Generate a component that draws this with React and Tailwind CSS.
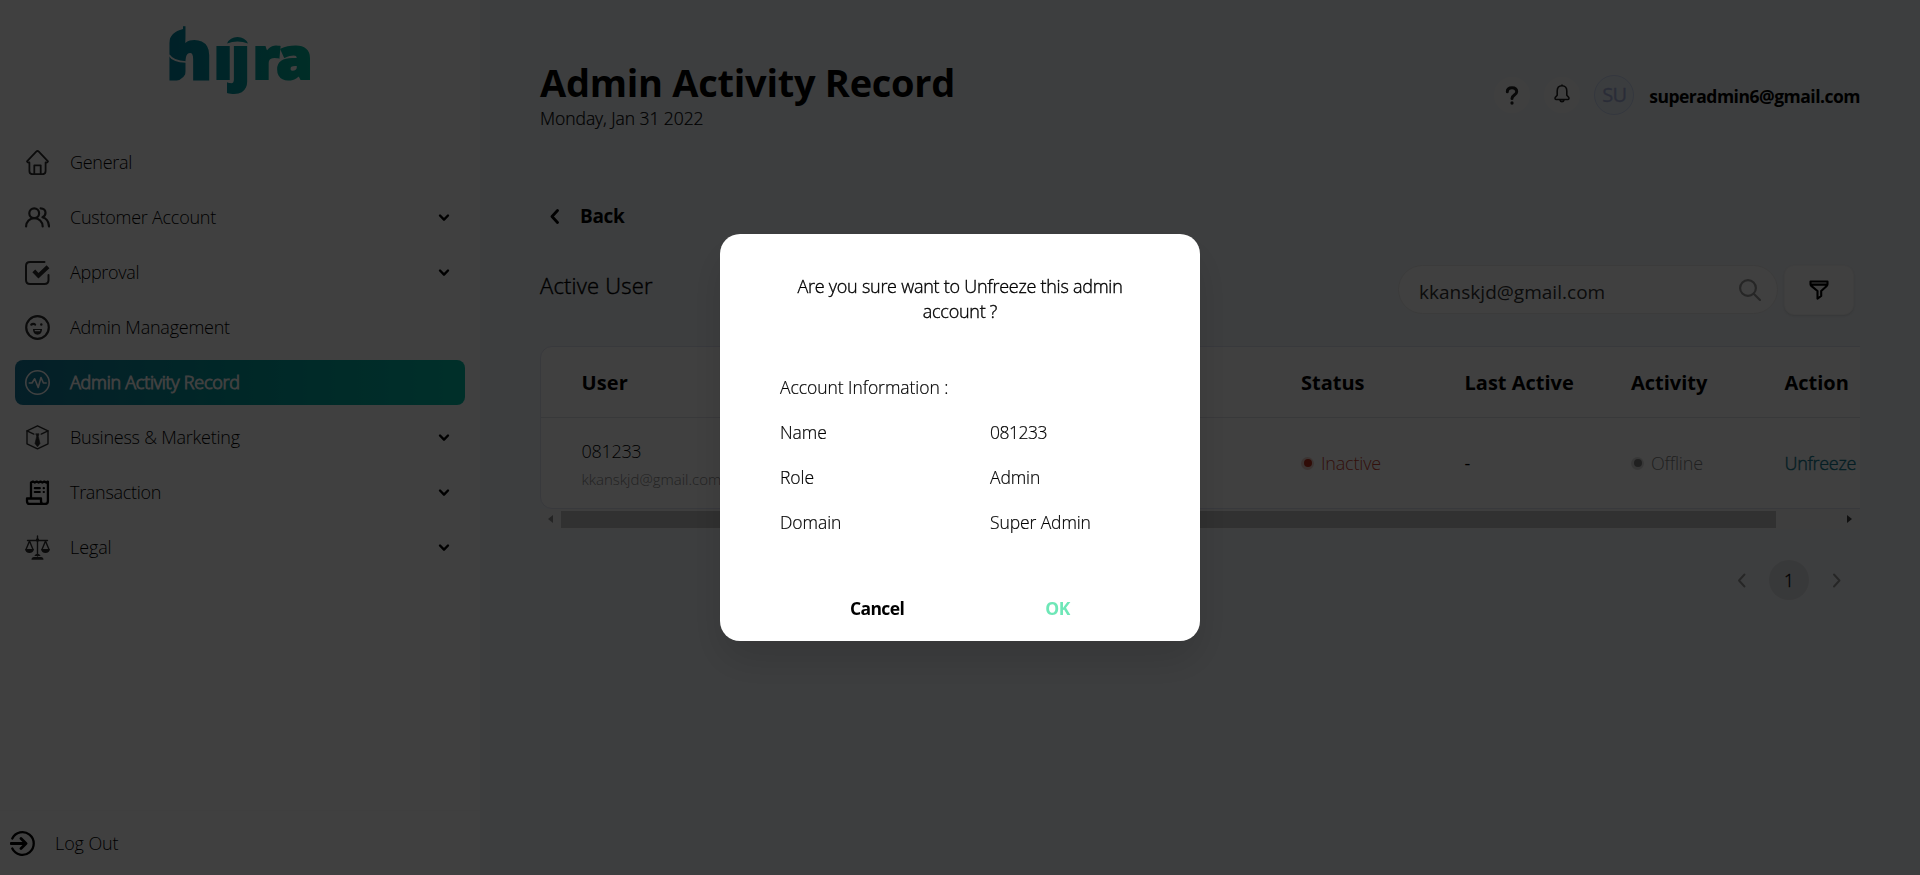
import React from "react";

const iconProps = { width: 25, height: 25, viewBox: "0 0 25 25", fill: "none", strokeLinecap: "round", strokeLinejoin: "round" };

function HomeIcon() {
  return (
    <svg {...iconProps} stroke="currentColor" strokeWidth="1.8">
      <path d="M2 11.3 11.2 1.600q1.300-1.200 2.600 0L23 11.300q-.4 1.600-2.400 1.200V21q0 3.200-3.200 3.200H7.600Q4.400 24.200 4.400 21v-8.500Q2.400 12.900 2 11.300Z" />
      <path d="M9.300 24v-8.700h6.400V24" />
    </svg>
  );
}

function UsersIcon() {
  return (
    <svg {...iconProps} stroke="currentColor" strokeWidth="2.200">
      <circle cx="9.200" cy="8.200" r="4.900" />
      <path d="M1.100 21.500c0-5 3.700-8.400 8.200-8.400s8.400 3.400 8.400 8.400" />
      <path d="M15.600 3.300c3 0 4.900 2 4.900 4.500 0 2.300-1.500 3.700-3 4.500 4 1.200 6.300 4.700 6.500 9.200" />
    </svg>
  );
}

function ApprovalIcon() {
  return (
    <svg {...iconProps} stroke="currentColor" strokeWidth="2">
      <path d="M19.500 1.900H5Q1 1.900 1 5.900V20q0 4 4 4h14.500q4 0 4-4v-5" />
      <path d="m8.800 10.900 4.700 4.900L23 6.800" strokeWidth="4" strokeLinecap="butt" strokeLinejoin="miter" />
    </svg>
  );
}

function WinkIcon() {
  return (
    <svg {...iconProps} stroke="currentColor" strokeWidth="2.200">
      <circle cx="12.500" cy="12.500" r="11.300" />
      <path d="M6.300 9.600c1-1 3-1 3.800 0" strokeWidth="2.200" />
      <circle cx="16.300" cy="9.500" r="1.200" fill="currentColor" stroke="none" />
      <path d="M8 14h9c0 3.800-2 5.700-4.500 5.700S8 17.800 8 14Z" fill="currentColor" stroke="none" />
      <path d="M10.200 15.600h4.600" stroke="#fff" strokeWidth="1.100" />
    </svg>
  );
}

function ActivityIcon() {
  return (
    <svg {...iconProps} stroke="currentColor" strokeWidth="1.600">
      <circle cx="12.500" cy="12.500" r="11.700" />
      <path d="M4.300 13H7l2.700-4.200 3.500 8.700L16 7.500l2.400 5.500h2.800" />
    </svg>
  );
}

function BusinessIcon() {
  return (
    <svg {...iconProps} stroke="currentColor" strokeWidth="1.400">
      <path d="M12.500.8 23 5.900v12.900l-10.500 5.100L2 18.800V5.900Z" />
      <path d="m2 5.900 6.800 3.200M23 5.900l-6.800 3.200" />
      <path d="M11 8.800h3l-.7 2.600 1.700 7.100-2.500 3.300-2.500-3.300 1.700-7.100Z" fill="currentColor" strokeWidth=".6" />
    </svg>
  );
}

function TransactionIcon() {
  return (
    <svg {...iconProps} stroke="currentColor" strokeWidth="2.300">
      <path d="M6 17.500V2.600l1.900-1 1.900 1 1.900-1 1.900 1 1.900-1 1.900 1 1.900-1 1.900 1 1.700-1V21q0 3-3 3H4.500Q2 24 2 21v-2.500h14V21q0 3 2.500 3" />
      <path d="M9.800 8.200h5M9.800 12h5M18.700 8.200h.2M18.700 12h.2" strokeWidth="2.200" />
    </svg>
  );
}

function LegalIcon() {
  return (
    <svg {...iconProps} stroke="currentColor" strokeWidth="1.400">
      <path d="M12.500 1v20M2.500 5.500h20" />
      <path d="M4.500 6 1 14.500M4.500 6 8 14.500M20.500 6 17 14.500M20.500 6l3.500 8.500" />
      <path d="M.2 14h8.600c0 2.600-1.800 3.900-4.300 3.900S.2 16.600.2 14ZM16.200 14h8.600c0 2.600-1.800 3.900-4.300 3.900s-4.300-1.300-4.300-3.900ZM6.500 24.800c0-2 1-2.800 2.500-2.800h7c1.500 0 2.500.8 2.500 2.800ZM9.500 21c.3-1.500 1.500-2 3-2s2.700.5 3 2Z" fill="currentColor" stroke="none" />
      <circle cx="12.500" cy="5" r="1.700" fill="currentColor" stroke="none" />
    </svg>
  );
}

function LogoutIcon() {
  return (
    <svg {...iconProps} stroke="currentColor" strokeWidth="2.300">
      <path d="M2.300 7.500a11.300 11.300 0 1 1 0 10" />
      <path d="M1 12.500h14.500M11 7.500l5 5-5 5" strokeWidth="2.800" />
    </svg>
  );
}

function Chevron({ dir, bold }) {
  const paths = { down: "m2 2.500 4 4.200 4-4.200", left: "M7.500 1.500 2 7.500l5.500 6", right: "m2 1.500 5.500 6-5.500 6" };
  return dir === "down" ? (
    <svg width="12" height="9" viewBox="0 0 12 9" fill="none" stroke="currentColor" strokeWidth="2.400" strokeLinecap="round" strokeLinejoin="round">
      <path d={paths.down} />
    </svg>
  ) : (
    <svg width="9" height="15" viewBox="0 0 9 15" fill="none" stroke="currentColor" strokeWidth={bold ? 2.8 : 2} strokeLinecap="round" strokeLinejoin="round">
      <path d={paths[dir]} />
    </svg>
  );
}

function Logo() {
  return (
    <svg width="140" height="62" viewBox="0 0 140 62" overflow="visible">
      <defs>
        <linearGradient id="brand" gradientUnits="userSpaceOnUse" x1="0" y1="30" x2="140" y2="20">
          <stop offset="0" stopColor="#00829f" />
          <stop offset="0.55" stopColor="#009c9e" />
          <stop offset="1" stopColor="#00b79b" />
        </linearGradient>
      </defs>
      <text x="-3.500 43.500 61 82.500 106" y="50" fontSize="59" fontWeight="800" fontFamily="Open Sans, sans-serif" fill="url(#brand)" stroke="url(#brand)" strokeWidth="2">
        <tspan fontSize="68" strokeWidth="3">h</tspan>ijra
      </text>
      <g fill="#fff">
        <path d="M42.500 -6H86V16.500H42.500Z" />
        <path d="M-1 -4V14Q0 3 13 0V-4Z" />
        <path d="M16.500 40Q16 50 4 53H16.500Z" />
      </g>
      <path d="M-1 26Q3 32.500 16 33" fill="none" stroke="#fff" strokeWidth="1.600" />
      <path d="M57 14.500Q60 8 67.500 8T78 14.500Q67.500 10.500 57 14.500Z" fill="url(#brand)" />
    </svg>
  );
}

const menu = [
  { label: "General", Icon: HomeIcon, cls: "tracking-[-0.28px]" },
  { label: "Customer Account", Icon: UsersIcon, cls: "tracking-[-0.25px]", sub: true },
  { label: "Approval", Icon: ApprovalIcon, cls: "tracking-[-0.3px]", sub: true },
  { label: "Admin Management", Icon: WinkIcon, cls: "tracking-[-0.24px]" },
  { label: "Admin Activity Record", Icon: ActivityIcon, cls: "tracking-[-0.25px] [-webkit-text-stroke:0.9px]", active: true },
  { label: "Business & Marketing", Icon: BusinessIcon, cls: "tracking-[-0.24px]", sub: true },
  { label: "Transaction", Icon: TransactionIcon, cls: "tracking-[-0.3px]", sub: true, dark: true },
  { label: "Legal", Icon: LegalIcon, cls: "tracking-[-0.1px]", sub: true },
];

function Sidebar() {
  return (
    <aside className="flex h-full w-[480px] shrink-0 flex-col bg-white">
      <div className="flex justify-center pt-[29px]">
        <Logo />
      </div>
      <nav className="mt-[49px] flex flex-1 flex-col gap-[10px] px-[15px]">
        {menu.map(({ label, Icon, cls, sub, active, dark }) => (
          <div
            key={label}
            className={
              active
                ? "flex h-[45px] items-center rounded-lg bg-linear-to-r from-[#147a9c] via-[#009c9c] to-[#00bda5] pr-[15px] pl-[10px] text-white"
                : "flex h-[45px] items-center pr-[15px] pl-[10px] text-black"
            }
          >
            <span className={active ? "text-white" : dark ? "text-black" : "text-[#2e2e2e]"}>
              <Icon />
            </span>
            <span className={`ml-[20px] flex-1 text-[18px] font-light ${cls}`}>{label}</span>
            {sub && <Chevron dir="down" />}
          </div>
        ))}
      </nav>
      <div className="flex h-[65px] items-center border-t border-[#fafafa] pl-[10px]">
        <LogoutIcon />
        <span className="ml-[20px] text-[18px] font-light tracking-[-0.1px]">Log Out</span>
      </div>
    </aside>
  );
}

function Header() {
  return (
    <header className="flex items-start justify-between pr-[60px] pt-[57px]">
      <div>
        <h1 className="text-[38px] leading-[50px] font-bold tracking-[-0.28px]">Admin Activity Record</h1>
        <p className="mt-px text-[17.5px] leading-[20px] font-light tracking-[-0.06px] [-webkit-text-stroke:0.2px]">Monday, Jan 31 2022</p>
      </div>
      <div className="mt-[18px] flex items-center">
        <div className="flex size-9 items-center justify-center rounded-full bg-[#fbfbfb]">
          <svg width="14" height="19" viewBox="0 0 14 19" fill="none" stroke="#222" strokeWidth="3" strokeLinecap="round">
            <path d="M2.300 5.700C2.300 3 4.300 1.700 7 1.700s4.700 1.400 4.700 4c0 3.300-4.700 3.300-4.700 6.700" />
            <path d="M7 17h.01" strokeWidth="3.300" />
          </svg>
        </div>
        <div className="ml-[14px] flex size-9 items-center justify-center rounded-full bg-[#fbfbfb] pb-1">
          <svg width="16" height="19" viewBox="0 0 16 19" fill="none" stroke="#222" strokeWidth="1.600" strokeLinejoin="round">
            <path d="M8 1.800C4.800 1.800 3.200 4.200 3.200 7v4.200L1.200 13.500q-.6 2 1 2h11.600q1.600 0 1-2l-2-2.300V7c0-2.800-1.600-5.200-4.800-5.200ZM8 1.800V.5M6 16c.4 2.200 3.600 2.200 4 0" />
          </svg>
        </div>
        <div className="ml-[14px] flex size-10 items-center justify-center rounded-full border border-[#cdd9f6] bg-[#ecf3fb] pb-px text-[20px] tracking-[-0.8px] text-[#a6b1dc] [-webkit-text-stroke:0.3px]">
          SU
        </div>
        <span className="mt-[3px] ml-[15px] text-[17.5px] font-bold tracking-[-0.5px]">superadmin6@gmail.com</span>
      </div>
    </header>
  );
}

const cols = "grid grid-cols-[719.5px_163.5px_166.5px_153.5px_90px] items-center pl-[40.5px]";

function Table() {
  return (
    <div className="mt-[31px] mr-[60px] overflow-hidden">
      <div className="h-[163px] w-[1500px] rounded-xl border border-[#dfe1f0] bg-white">
        <div className={`${cols} h-[71px] border-b border-[#e0e2e8] pt-px text-[20px] font-bold`}>
          <span className="tracking-[0.1px]">User</span>
          <span>Status</span>
          <span>Last Active</span>
          <span>Activity</span>
          <span>Action</span>
        </div>
        <div className={`${cols} h-[90px] text-[18px] font-light`}>
          <div className="pt-[3px]">
            <p className="leading-[28px] tracking-[-0.3px]">081233</p>
            <p className="text-[15px] leading-[28px] text-[#888]">kkanskjd@gmail.com</p>
          </div>
          <div className="flex items-center tracking-[-0.2px] text-[#c8402e]">
            <span className="mr-[7px] flex size-[13px] items-center justify-center rounded-full bg-[#eccdc8]">
              <span className="size-2 rounded-full bg-[#c0301c]" />
            </span>
            Inactive
          </div>
          <span className="font-normal">-</span>
          <div className="flex items-center tracking-[-0.2px] text-[#808080]">
            <span className="mr-[7px] flex size-[13px] items-center justify-center rounded-full bg-[#dcdcdc]">
              <span className="size-2 rounded-full bg-[#808080]" />
            </span>
            Offline
          </div>
          <span className="tracking-[-0.3px] text-[#147a90] [-webkit-text-stroke:0.4px]">Unfreeze</span>
        </div>
      </div>
      <div className="flex h-[20px] items-center bg-[#f5f5f5]">
        <span className="ml-[8px] h-0 w-0 border-y-[4.5px] border-r-[5px] border-y-transparent border-r-[#909090]" />
        <span className="ml-[8px] h-[17px] w-[1215px] bg-[#c1c1c1]" />
        <span className="ml-auto mr-[8px] h-0 w-0 border-y-[4.5px] border-l-[5px] border-y-transparent border-l-[#404040]" />
      </div>
    </div>
  );
}

function Main() {
  return (
    <main className="flex min-w-0 flex-1 flex-col bg-[#f3f7fb] pl-[60px]">
      <Header />
      <div className="mt-[75px] flex h-[26px] items-center pl-[10px]">
        <Chevron dir="left" bold />
        <span className="ml-[21px] pt-[1px] text-[19px] font-bold tracking-[-0.35px]">Back</span>
      </div>
      <div className="mt-[36px] flex items-start justify-between pr-[66px]">
        <h2 className="mt-[5px] text-[22px] leading-[30px] font-light tracking-[0.2px] [-webkit-text-stroke:0.4px]">Active User</h2>
        <div className="flex gap-[6px]">
          <div className="flex h-[49px] w-[380px] items-center justify-between rounded-full border border-[#eaeaea] bg-white pr-[16px] pl-[20px]">
            <span className="pt-[5px] text-[19px] tracking-[0.02px] text-[#333]">kkanskjd@gmail.com</span>
            <svg width="22" height="22" viewBox="0 0 22 22" fill="none" stroke="#989898" strokeWidth="2.200" strokeLinecap="round">
              <circle cx="9" cy="9" r="7.900" />
              <path d="m15 15 6 6" />
            </svg>
          </div>
          <div className="flex h-[50px] w-[70px] items-center justify-center rounded-[10px] border border-[#f6f6f6] bg-white shadow-sm">
            <svg width="20" height="20" viewBox="0 0 20 20" fill="none" stroke="#000" strokeWidth="2.100" strokeLinejoin="round">
              <path d="M1.500 1.500h17v2.700q0 1-.8 1.700L12.200 11v5L8.500 18.700V11L2.300 5.900q-.8-.7-.8-1.700ZM1.500 4.600h17" />
            </svg>
          </div>
        </div>
      </div>
      <Table />
      <div className="mt-[31px] flex items-center justify-end pr-[79px] text-[#999]">
        <Chevron dir="left" />
        <span className="mr-[23px] ml-[23px] flex size-10 items-center justify-center rounded-full bg-[#e0e2e5] text-[17.500px] font-light text-black [-webkit-text-stroke:0.3px]">1</span>
        <Chevron dir="right" />
      </div>
    </main>
  );
}

const info = [
  ["Name", "081233"],
  ["Role", "Admin"],
  ["Domain", "Super Admin"],
];

function ConfirmDialog() {
  return (
    <div className="fixed inset-0 flex items-center justify-center bg-black/75">
      <div role="dialog" className="flex h-[407px] w-[480px] flex-col rounded-[20px] bg-white pt-[40px] shadow-[0_20px_40px_rgba(0,0,0,0.13)]">
        <p className="text-center text-[18px] leading-[25px] font-light tracking-[-0.26px] [-webkit-text-stroke:0.35px]">
          Are you sure want to Unfreeze this admin
          <br />
          account ?
        </p>
        <div className="mt-[41px] pl-[60px] text-[17.5px] leading-[45px] font-light tracking-[-0.05px] [-webkit-text-stroke:0.2px]">
          <p>Account Information :</p>
          {info.map(([k, v]) => (
            <div key={k} className="grid grid-cols-[210px_1fr]">
              <span>{k}</span>
              <span className={k === "Name" ? "tracking-[-0.5px]" : "tracking-[-0.1px]"}>{v}</span>
            </div>
          ))}
        </div>
        <div className="mt-[41px] flex h-[45px] items-center gap-[141px] pl-[130px] text-[17.5px]">
          <button className="font-bold tracking-[-0.63px]">Cancel</button>
          <button className="font-bold tracking-[-0.3px] text-[#6ee7b7]">OK</button>
        </div>
      </div>
    </div>
  );
}

export default function App() {
  return (
    <div className="flex h-[875px] w-full overflow-hidden font-['Open_Sans',sans-serif] text-black">
      <Sidebar />
      <Main />
      <ConfirmDialog />
    </div>
  );
}
